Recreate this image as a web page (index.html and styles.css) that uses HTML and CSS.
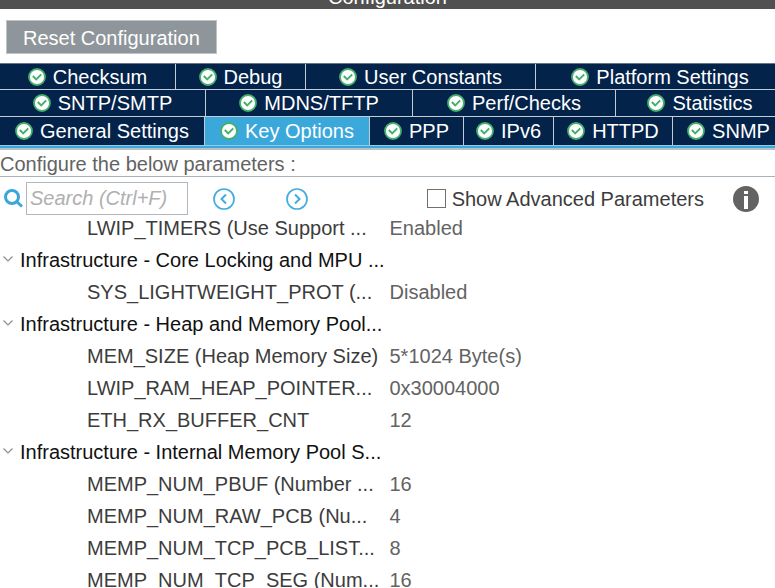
FILE: index.html
```html
<!DOCTYPE html>
<html lang="en">

<head>
    <meta charset="UTF-8">
    <title>Configuration</title>
    <meta name="viewport" content="width=device-width, initial-scale=1.0">

    <link rel="stylesheet" href="styles.css">
</head>

<body>
    <!-- shared icons -->
    <svg class="sprite" aria-hidden="true">
        <symbol id="ok" viewBox="0 0 18 18">
            <circle cx="9" cy="9" r="8" fill="#fff" stroke="#43b06c" stroke-width="1.8" />
            <path d="M4.8 8l3.400 3.400 5-5" fill="none" stroke="#43b06c" stroke-width="2" />
        </symbol>
        <symbol id="chevron" viewBox="0 0 12 12">
            <path d="M1.5 2.500L6 7l4.500-4.500" fill="none" stroke="#8c8c8c" stroke-width="1.2" />
        </symbol>
    </svg>

    <header class="title-bar">
        <h1>Configuration</h1>
    </header>

    <div class="actions">
        <button type="button" class="reset-btn">Reset Configuration</button>
    </div>

    <nav class="tabs">
        <div class="tab-row row-top">
            <button type="button" class="tab"><svg><use href="#ok" /></svg>Checksum</button>
            <button type="button" class="tab"><svg><use href="#ok" /></svg>Debug</button>
            <button type="button" class="tab"><svg><use href="#ok" /></svg>User Constants</button>
            <button type="button" class="tab"><svg><use href="#ok" /></svg>Platform Settings</button>
        </div>
        <div class="tab-row row-middle">
            <button type="button" class="tab"><svg><use href="#ok" /></svg>SNTP/SMTP</button>
            <button type="button" class="tab"><svg><use href="#ok" /></svg>MDNS/TFTP</button>
            <button type="button" class="tab"><svg><use href="#ok" /></svg>Perf/Checks</button>
            <button type="button" class="tab"><svg><use href="#ok" /></svg>Statistics</button>
        </div>
        <div class="tab-row row-bottom">
            <button type="button" class="tab"><svg><use href="#ok" /></svg>General Settings</button>
            <button type="button" class="tab active"><svg><use href="#ok" /></svg>Key Options</button>
            <button type="button" class="tab"><svg><use href="#ok" /></svg>PPP</button>
            <button type="button" class="tab"><svg><use href="#ok" /></svg>IPv6</button>
            <button type="button" class="tab"><svg><use href="#ok" /></svg>HTTPD</button>
            <button type="button" class="tab"><svg><use href="#ok" /></svg>SNMP</button>
        </div>
    </nav>

    <main>
        <p class="hint">Configure the below parameters :</p>

        <div class="toolbar">
            <label for="search" class="search-label" aria-label="Search">
                <svg viewBox="0 0 20 20">
                    <circle cx="8" cy="8" r="6.500" fill="none" stroke="#3aa6d9" stroke-width="3" />
                    <path d="M12.500 12.500l5.500 5" stroke="#3aa6d9" stroke-width="3" />
                </svg>
            </label>
            <input type="text" id="search" class="search" placeholder="Search (Ctrl+F)">
            <button type="button" class="icon-btn prev" aria-label="Previous">
                <svg viewBox="0 0 22 22" fill="none" stroke="#41addf">
                    <circle cx="11" cy="11" r="10" stroke-width="1.700" />
                    <path d="M13 6.500L8.500 11l4.500 4.500" stroke-width="2" />
                </svg>
            </button>
            <button type="button" class="icon-btn next" aria-label="Next">
                <svg viewBox="0 0 22 22" fill="none" stroke="#41addf">
                    <circle cx="11" cy="11" r="10" stroke-width="1.700" />
                    <path d="M9 6.500l4.500 4.500L9 15.500" stroke-width="2" />
                </svg>
            </button>
            <div class="advanced">
                <input type="checkbox" id="advanced">
                <label for="advanced">Show Advanced Parameters</label>
            </div>
            <button type="button" class="icon-btn info" aria-label="Information">
                <svg viewBox="0 0 26 26">
                    <circle cx="13" cy="13" r="13" fill="#636363" />
                    <rect x="11" y="5" width="4" height="3" fill="#fff" />
                    <rect x="11" y="10" width="4" height="13" fill="#fff" />
                </svg>
            </button>
        </div>

        <table class="params">
            <tr>
                <td class="name">LWIP_TIMERS (Use Support ...</td>
                <td>Enabled</td>
            </tr>
            <tr>
                <th colspan="2"><button type="button" class="group"><svg><use href="#chevron" /></svg>Infrastructure - Core Locking and MPU ...</button></th>
            </tr>
            <tr>
                <td class="name">SYS_LIGHTWEIGHT_PROT (...</td>
                <td>Disabled</td>
            </tr>
            <tr>
                <th colspan="2"><button type="button" class="group"><svg><use href="#chevron" /></svg>Infrastructure - Heap and Memory Pool...</button></th>
            </tr>
            <tr>
                <td class="name">MEM_SIZE (Heap Memory Size)</td>
                <td>5*1024 Byte(s)</td>
            </tr>
            <tr>
                <td class="name">LWIP_RAM_HEAP_POINTER...</td>
                <td>0x30004000</td>
            </tr>
            <tr>
                <td class="name">ETH_RX_BUFFER_CNT</td>
                <td>12</td>
            </tr>
            <tr>
                <th colspan="2"><button type="button" class="group"><svg><use href="#chevron" /></svg>Infrastructure - Internal Memory Pool S...</button></th>
            </tr>
            <tr>
                <td class="name">MEMP_NUM_PBUF (Number ...</td>
                <td>16</td>
            </tr>
            <tr>
                <td class="name">MEMP_NUM_RAW_PCB (Nu...</td>
                <td>4</td>
            </tr>
            <tr>
                <td class="name">MEMP_NUM_TCP_PCB_LIST...</td>
                <td>8</td>
            </tr>
            <tr>
                <td class="name">MEMP_NUM_TCP_SEG (Num...</td>
                <td>16</td>
            </tr>
        </table>
    </main>
</body>

</html>
```
FILE: styles.css
```css
* {
    margin: 0;
    padding: 0;
    box-sizing: border-box;
}

body {
    height: 100vh;
    overflow: hidden;
    background-color: white;
    color: #636363;
    font-family: "Liberation Sans", Arial, sans-serif;
    font-size: 20px;
    line-height: 24px;
}

button,
input {
    font: inherit;
    color: inherit;
}

button {
    border: none;
    background: none;
    cursor: pointer;
}

svg {
    display: block;
    flex: none;
}

.sprite {
    display: none;
}

.title-bar {
    display: flex;
    justify-content: center;
    align-items: flex-end;
    height: 9px;
    overflow: hidden;
    background-color: #505150;
}

.title-bar h1 {
    color: white;
    font-size: 20px;
    font-weight: normal;
    line-height: 24px;
}

.actions {
    padding: 11px 6px 9px;
}

.reset-btn {
    display: block;
    height: 34px;
    padding: 2px 16px 0;
    border: 1px solid #bcc4c6;
    background-color: #8f969b;
    color: white;
    line-height: 30px;
}

/* tabs */
.tabs {
    overflow: hidden;
    padding-bottom: 2px;
    border-top: 1px solid #64748c;
    border-bottom: 2px solid #b9c0c5;
    background-color: #3ba8dc;
}

.tab-row {
    display: grid;
    /* rows run a little past the right edge */
    margin-right: -10px;
    border-bottom: 1px solid #c3cbd5;
}

.row-top {
    grid-template-columns: 176fr 130fr 230fr 249fr;
}

.row-middle {
    grid-template-columns: 206fr 207fr 203fr 169fr;
}

.row-bottom {
    grid-template-columns: 205fr 165fr 94fr 90fr 119fr 112fr;
    border-bottom-color: #8fcbe8;
}

.tab {
    display: flex;
    justify-content: center;
    align-items: center;
    gap: 7px;
    height: 26px;
    border-right: 1px solid #c3cbd5;
    background-color: #03234b;
    color: white;
    line-height: 26px;
    white-space: nowrap;
}

.row-top .tab {
    height: 25px;
}

.row-bottom .tab {
    height: 28px;
}

.tab.active {
    background-color: #3ba8dc;
}

.tab svg {
    width: 18px;
    height: 18px;
}

.hint {
    padding-top: 3px;
    border-bottom: 1px solid #a9b2b9;
    line-height: 23px;
}

/* search bar */
.toolbar {
    display: flex;
    align-items: center;
    padding: 5px 16px 0 4px;
}

.search-label svg {
    width: 20px;
    height: 20px;
}

.search {
    width: 162px;
    height: 33px;
    margin-left: 2px;
    padding: 0 3px;
    border: 1px solid #b3b7ba;
}

.search::placeholder {
    color: #b0b0b0;
    font-style: italic;
}

.icon-btn svg {
    width: 22px;
    height: 22px;
}

.prev {
    margin-left: 25px;
}

.next {
    margin-left: 51px;
}

.advanced {
    display: flex;
    align-items: center;
    gap: 6px;
    margin-left: auto;
    color: #3c3c3c;
    white-space: nowrap;
}

.advanced input {
    appearance: none;
    width: 19px;
    height: 19px;
    border: 1px solid #707070;
    background-color: white;
}

.advanced input:checked {
    background-color: #3ba8dc;
}

.info {
    margin-left: 29px;
}

.info svg {
    width: 26px;
    height: 26px;
}

/* parameter list, scrolled up under the search bar */
.params {
    width: 100%;
    margin-top: -3px;
    border-collapse: collapse;
    table-layout: fixed;
}

.params td,
.params th {
    height: 32px;
    padding-left: 2px;
    font-weight: normal;
    text-align: left;
    white-space: nowrap;
}

.params .name {
    width: 50%;
    padding-left: 87px;
    color: #3c3c3c;
}

.group {
    display: flex;
    align-items: center;
    gap: 6px;
    color: #111111;
}

.group svg {
    width: 12px;
    height: 12px;
}
```
